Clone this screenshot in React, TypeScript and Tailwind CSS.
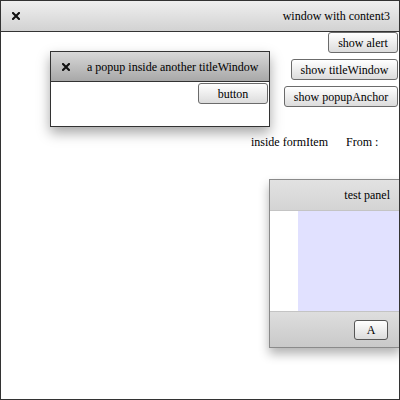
import React from "react";

const CloseIcon = () => (
  <svg width="8" height="8" viewBox="0 0 8 8" className="shrink-0">
    <path d="M1 1 L7 7 M7 1 L1 7" stroke="#111" strokeWidth="2.1" strokeLinecap="square" />
  </svg>
);

const Btn = ({ label, className = "" }: { label: string; className?: string }) => (
  <button
    className={
      "h-[21px] rounded-[3px] border border-[#6b6b6b] bg-gradient-to-b from-white to-[#dcdcdc] text-[12px] leading-none text-black " +
      className
    }
  >
    {label}
  </button>
);

const App = () => {
  return (
    <div className="relative h-[400px] w-[400px] overflow-hidden border border-[#333] bg-white font-['Liberation_Serif',serif] text-[12px] text-black">
      {/* outer title bar */}
      <div className="flex h-[31px] items-center justify-between border-b border-[#333] bg-gradient-to-b from-[#efefef] to-[#d2d2d2] pl-[11px] pr-[9px]">
        <CloseIcon />
        <span className="text-[12px]">window with content3</span>
      </div>

      {/* body */}
      <div className="flex flex-col items-end">
        <Btn label="show alert" className="mr-[1px] w-[70px]" />
        <Btn label="show titleWindow" className="mr-[1px] mt-[6px] w-[107px]" />
        <Btn label="show popupAnchor" className="mr-[1px] mt-[6px] w-[114px]" />

        <div className="mr-[17px] mt-[26px] flex items-center gap-[18px]">
          <span>inside formItem</span>
          <span className="w-[36px]">From :</span>
        </div>

        <div className="mr-[-2px] mt-[28px] flex h-[169px] w-[132px] flex-col border border-[#8a8a8a] shadow-[0_6px_10px_rgba(0,0,0,0.3)]">
          <div className="flex h-[31px] items-center justify-end border-b border-[#c4c4c4] bg-gradient-to-b from-[#e2e2e2] to-[#d4d4d4] pr-[10px]">
            test panel
          </div>
          <div className="flex h-[100px]">
            <div className="w-[28px] bg-white" />
            <div className="flex-1 bg-[#e1e1ff]" />
          </div>
          <div className="flex flex-1 items-center justify-end border-t border-[#c4c4c4] bg-gradient-to-b from-[#dedede] to-[#c9c9c9] pr-[12px]">
            <button className="h-[20px] w-[34px] rounded-[3px] border border-[#555] bg-gradient-to-b from-white to-[#dcdcdc] text-[12px] leading-none">
              A
            </button>
          </div>
        </div>
      </div>

      {/* popup */}
      <div className="absolute left-[49px] top-[50px] flex h-[76px] w-[220px] flex-col border border-[#333] bg-white shadow-[0_6px_12px_rgba(0,0,0,0.35)]">
        <div className="flex h-[30px] items-center gap-[17px] border-b border-[#333] bg-gradient-to-b from-[#d8d8d8] to-[#a8a8a8] pl-[11px]">
          <CloseIcon />
          <span>a popup inside another titleWindow</span>
        </div>
        <div className="flex justify-end pr-[1px] pt-[1px]">
          <Btn label="button" className="h-[20px] w-[70px]" />
        </div>
      </div>
    </div>
  );
};

export default App;
